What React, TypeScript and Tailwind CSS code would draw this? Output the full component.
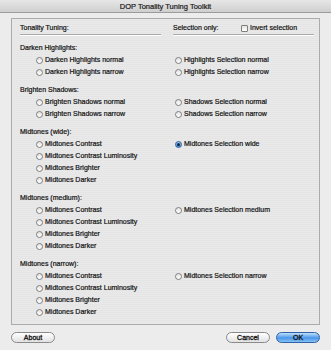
import React from "react";

function Radio({ checked = false }: { checked?: boolean }) {
  if (checked) {
    return (
      <span className="relative inline-flex w-[7px] h-[7px] shrink-0 items-center justify-center rounded-full border border-[#2f5f9e] bg-[linear-gradient(#a8d0f8,#3b86dc)]">
        <span className="w-[3px] h-[3px] rounded-full bg-[#10203a]" />
      </span>
    );
  }
  return (
    <span className="inline-block w-[7px] h-[7px] shrink-0 rounded-full border border-[#7e7e7e] bg-[linear-gradient(#e4e4e4,#ffffff)]" />
  );
}

function Row({ label, checked }: { label: string; checked?: boolean }) {
  return (
    <div className="flex items-center h-[12px] gap-[2px] whitespace-nowrap">
      <Radio checked={checked} />
      <span>{label}</span>
    </div>
  );
}

type Group = { title: string; left: string[]; right: (string | null)[]; checkedRight?: number };

const groups: Group[] = [
  {
    title: "Darken Highlights:",
    left: ["Darken Highlights normal", "Darken Highlights narrow"],
    right: ["Highlights Selection normal", "Highlights Selection narrow"],
  },
  {
    title: "Brighten Shadows:",
    left: ["Brighten Shadows normal", "Brighten Shadows narrow"],
    right: ["Shadows Selection normal", "Shadows Selection narrow"],
  },
  {
    title: "Midtones (wide):",
    left: ["Midtones Contrast", "Midtones Contrast Luminosity", "Midtones Brighter", "Midtones Darker"],
    right: ["Midtones Selection wide", null, null, null],
    checkedRight: 0,
  },
  {
    title: "Midtones (medium):",
    left: ["Midtones Contrast", "Midtones Contrast Luminosity", "Midtones Brighter", "Midtones Darker"],
    right: ["Midtones Selection medium", null, null, null],
  },
  {
    title: "Midtones (narrow):",
    left: ["Midtones Contrast", "Midtones Contrast Luminosity", "Midtones Brighter", "Midtones Darker"],
    right: ["Midtones Selection narrow", null, null, null],
  },
];

export default function App() {
  return (
    <div
      className="relative w-[331px] h-[350px] overflow-hidden bg-[#ececec] text-[#111] text-[7px] leading-[12px] [-webkit-text-stroke:0.2px_#111]"
      style={{ fontFamily: '"Liberation Sans", Arial, sans-serif' }}
    >
      {/* Title bar */}
      <div className="h-[13px] pt-[1px] flex items-center justify-center bg-[linear-gradient(#e6e6e6,#cfcfcf)] border-b border-[#9c9c9c] text-[7.5px] text-[#1e1e1e]">
        DOP Tonality Tuning Toolkit
      </div>

      <div className="px-[11px] pt-[5px]">
        {/* Group box */}
        <div className="h-[307px] border border-[#ababab] bg-[repeating-linear-gradient(#e9e9e9_0px,#e9e9e9_1px,#e5e5e5_1px,#e5e5e5_2px)] pl-[8px] pr-[5px] pt-[3px]">
          {/* Header row */}
          <div className="flex">
            <div className="w-[154px]">
              <div className="h-[12px] flex items-center">Tonality Tuning:</div>
              <div className="w-[141px] h-[1px] bg-[#a9a9a9] border-b border-white box-content" />
            </div>
            <div className="flex-1">
              <div className="h-[12px] flex items-center">
                <span className="w-[68px]">Selection only:</span>
                <span className="inline-block w-[7px] h-[7px] rounded-[1px] border border-[#7e7e7e] bg-[linear-gradient(#e4e4e4,#ffffff)] mr-[2px]" />
                <span>Invert selection</span>
              </div>
              <div className="w-[141px] h-[1px] bg-[#a9a9a9] border-b border-white box-content" />
            </div>
          </div>

          <div className="mt-[5px] flex flex-col gap-[5px]">
            {groups.map((g) => (
              <div key={g.title}>
                <div className="h-[13px] flex items-center">{g.title}</div>
                {g.left.map((l, i) => (
                  <div key={i} className="flex">
                    <div className="w-[154px] pl-[16px]">
                      <Row label={l} />
                    </div>
                    <div className="flex-1 pl-[1px]">
                      {g.right[i] ? (
                        <Row label={g.right[i] as string} checked={g.checkedRight === i} />
                      ) : (
                        <div className="h-[12px]" />
                      )}
                    </div>
                  </div>
                ))}
              </div>
            ))}
          </div>
        </div>

        {/* Buttons */}
        <div className="mt-[7px] flex items-center">
          <button className="w-[44px] h-[11px] rounded-full border border-[#8a8a8a] bg-[linear-gradient(#ffffff,#e2e2e2)] text-[7px] leading-[9px] text-[#111] [-webkit-text-stroke:0.3px_#111]">
            About
          </button>
          <div className="flex-1" />
          <button className="w-[44px] h-[11px] rounded-full border border-[#8a8a8a] bg-[linear-gradient(#ffffff,#e2e2e2)] text-[7px] leading-[9px] text-[#111] [-webkit-text-stroke:0.3px_#111]">
            Cancel
          </button>
          <button className="ml-[6px] w-[44px] h-[11px] rounded-full border border-[#2f62a6] bg-[linear-gradient(#bfe0fb,#4a96ea_55%,#86c2f6)] text-[7px] leading-[9px] text-[#111] [-webkit-text-stroke:0.3px_#111]">
            OK
          </button>
        </div>
      </div>
    </div>
  );
}
